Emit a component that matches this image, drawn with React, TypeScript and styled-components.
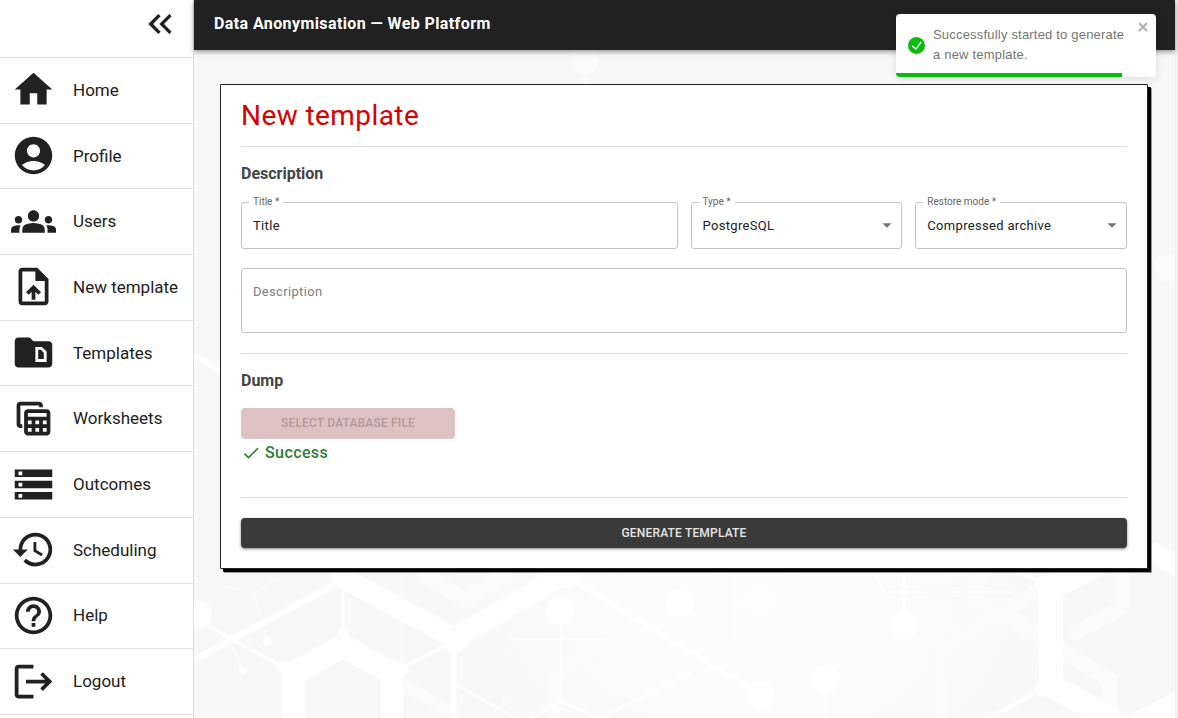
import React from 'react';
import styled, { createGlobalStyle } from 'styled-components';
import {
  MdKeyboardDoubleArrowLeft,
  MdHome,
  MdAccountCircle,
  MdGroups,
  MdOutlineUploadFile,
  MdSnippetFolder,
  MdTableView,
  MdStorage,
  MdHistory,
  MdHelpOutline,
  MdLogout,
  MdCheck,
  MdArrowDropDown,
} from 'react-icons/md';

const GlobalStyle = createGlobalStyle`
  *, *::before, *::after { box-sizing: border-box; }
  body {
    margin: 0;
    font-family: Roboto, "Liberation Sans", sans-serif;
    font-size: 16px;
    color: #212121;
    background: #fff;
  }
  button, input, select, textarea { font: inherit; letter-spacing: inherit; color: inherit; }
`;

const Page = styled.div`
  display: flex;
  min-height: 100vh;
  border-right: 3px solid #f1f1f1;
`;

const Sidebar = styled.aside`
  flex: 0 0 194px;
  border-right: 1px solid #dedede;
  background: #fff;
`;

const SidebarTop = styled.div`
  display: flex;
  justify-content: flex-end;
  align-items: flex-start;
  height: 58px;
  padding: 4px 13px;
  border-bottom: 1px solid #dedede;
`;

const CollapseButton = styled.button`
  display: flex;
  padding: 0;
  border: 0;
  background: none;
  font-size: 40px;
  cursor: pointer;
`;

const NavList = styled.ul`
  display: grid;
  grid-auto-rows: 1fr;
  min-height: 657px;
  margin: 0;
  padding: 0;
  list-style: none;
`;

const NavItem = styled.li`
  display: flex;
  border-bottom: 1px solid #dedede;
`;

const NavLink = styled.a`
  display: flex;
  flex: 1;
  align-items: center;
  gap: 17px;
  padding: 0 0 1px 11px;
  color: inherit;
  font-size: 17px;
  line-height: 24px;
  text-decoration: none;
  white-space: nowrap;

  svg { flex: none; width: 45px; height: 45px; }
`;

const Content = styled.div`
  position: relative;
  display: flex;
  flex: 1;
  flex-direction: column;
  min-width: 0;
`;

const Header = styled.header`
  position: relative;
  z-index: 1;
  display: flex;
  align-items: center;
  height: 50px;
  padding: 0 20px 3px;
  background: #212121;
  box-shadow: 0 2px 4px rgba(0, 0, 0, 0.3), 0 1px 8px rgba(0, 0, 0, 0.15);
  color: #fff;
`;

const AppTitle = styled.span`
  font-size: 16px;
  font-weight: 700;
  letter-spacing: 0.025em;
  line-height: 24px;
`;

const Main = styled.main`
  position: relative;
  flex: 1;
  padding: 34px 27px 34px 26px;
`;

const Backdrop = styled.svg`
  position: absolute;
  inset: 0;
  width: 100%;
  height: 100%;
  background: #f8f8f8;
`;

const Card = styled.form`
  position: relative;
  padding: 12px 20px 20px;
  border: 1px solid #212121;
  border-radius: 1px;
  background: #fff;
  box-shadow: 3px 3px 0 #000, 4px 4px 0 #999;
`;

const PageTitle = styled.h1`
  margin: 0;
  color: #d50000;
  font-size: 28px;
  font-weight: 400;
  letter-spacing: 0.015em;
  line-height: 37px;
`;

const Divider = styled.hr`
  margin: 0;
  border: 0;
  border-top: 1px solid #dedede;
`;

const SectionTitle = styled.h2`
  margin: 0;
  color: #444;
  font-size: 16px;
  font-weight: 700;
  line-height: 24px;
`;

const Section = styled.section<{ $bottom: number }>`
  padding: 15px 0 ${(p) => p.$bottom}px;
`;

const TitleBlock = styled.div`
  padding-bottom: 12px;
`;

const FieldGrid = styled.div`
  display: grid;
  grid-template-columns: repeat(4, minmax(0, 1fr));
  gap: 19px 13px;
  margin-top: 16px;
`;

const Field = styled.div<{ $span?: number }>`
  position: relative;
  grid-column: span ${(p) => p.$span ?? 1};
  display: flex;

  > svg {
    position: absolute;
    top: 12px;
    right: 4px;
    width: 22px;
    height: 22px;
    color: #757575;
    pointer-events: none;
  }
`;

const FieldLabel = styled.label`
  position: absolute;
  top: -8px;
  left: 8px;
  padding: 0 4px;
  background: #fff;
  color: #666;
  font-size: 10px;
  line-height: 16px;
`;

const fieldBox = `
  width: 100%;
  margin: 0;
  border: 1px solid #c4c4c4;
  border-radius: 3px;
  background: #fff;
  color: #212121;
  font-size: 13px;
  letter-spacing: 0.025em;
  outline: 0;
`;

const TextInput = styled.input`
  ${fieldBox}
  height: 47px;
  padding: 0 11px;
`;

const SelectInput = styled.select`
  ${fieldBox}
  height: 47px;
  padding: 0 28px 0 11px;
  appearance: none;
`;

const TextArea = styled.textarea`
  ${fieldBox}
  height: 65px;
  padding: 13px 11px;
  line-height: 20px;
  resize: none;

  &::placeholder { color: #808080; opacity: 1; }
`;

const Button = styled.button`
  display: block;
  border: 0;
  border-radius: 4px;
  font-size: 12px;
  font-weight: 500;
  letter-spacing: 0.015em;
  text-transform: uppercase;
`;

const FileButton = styled(Button)`
  height: 31px;
  margin-top: 15px;
  padding: 0 40px 1px;
  background: #dec1c1;
  color: #b29b9b;
`;

const SubmitButton = styled(Button)`
  width: 100%;
  height: 30px;
  margin-top: 20px;
  background: #3a3a3a;
  box-shadow: 0 1px 3px rgba(0, 0, 0, 0.5);
  color: #e6e6e6;
`;

const Status = styled.p`
  display: flex;
  align-items: center;
  gap: 4px;
  margin: 2px 0 0;
  color: #2e7d32;
  font-size: 16px;
  font-weight: 500;
  letter-spacing: 0.025em;
  line-height: 24px;

  svg { width: 20px; height: 20px; }
`;

const Toast = styled.div`
  position: absolute;
  z-index: 2;
  top: 14px;
  right: 19px;
  display: flex;
  align-items: center;
  gap: 8px;
  width: 260px;
  height: 63px;
  padding: 0 12px;
  overflow: hidden;
  border-radius: 4px;
  background: #fff;
  box-shadow: 0 1px 9px rgba(0, 0, 0, 0.12);
  color: #757575;
  font-family: "Liberation Sans", sans-serif;
  font-size: 13px;
  letter-spacing: 0.015em;
  line-height: 20px;

  > svg { flex: none; }
`;

const ToastText = styled.span`
  padding-bottom: 2px;
  white-space: nowrap;
`;

const ToastClose = styled.button`
  position: absolute;
  top: 8px;
  right: 8px;
  display: flex;
  padding: 0;
  border: 0;
  background: none;
`;

const ToastProgress = styled.div`
  position: absolute;
  bottom: 0;
  left: 0;
  height: 4px;
  background: #07bc0c;
`;

const navigation = [
  { label: 'Home', icon: MdHome },
  { label: 'Profile', icon: MdAccountCircle },
  { label: 'Users', icon: MdGroups },
  { label: 'New template', icon: MdOutlineUploadFile },
  { label: 'Templates', icon: MdSnippetFolder },
  { label: 'Worksheets', icon: MdTableView },
  { label: 'Outcomes', icon: MdStorage },
  { label: 'Scheduling', icon: MdHistory },
  { label: 'Help', icon: MdHelpOutline },
  { label: 'Logout', icon: MdLogout },
];

function MoleculeBackdrop() {
  return (
    <Backdrop viewBox="194 50 981 668" preserveAspectRatio="xMinYMin slice" aria-hidden="true">
      <defs>
        <radialGradient id="glow">
          <stop offset="0" stopColor="#fdfdfd" />
          <stop offset="1" stopColor="#fdfdfd" stopOpacity="0" />
        </radialGradient>
      </defs>
      <ellipse cx="760" cy="600" rx="330" ry="240" fill="url(#glow)" />
      <g fill="none" stroke="#fbfbfb">
        <path d="M402 573V718" strokeWidth="3" />
        <path d="M420 573L465 600L510 573" strokeWidth="16" />
        <path d="M611 573V635M731 573V643M821 573V680" strokeWidth="4" />
        <path d="M554 718V676L611 643L690 690" strokeWidth="14" />
        <path d="M730 650L820 700V718" strokeWidth="16" />
        <path d="M977 573V600L1000 613L1110 680V718" strokeWidth="16" />
        <path d="M939 718V650L1000 613L1040 590" strokeWidth="15" />
        <path d="M1121 573V608L1070 636" strokeWidth="15" />
        <path d="M404 685L460 718" strokeWidth="12" />
        <path d="M225 586L254 594L278 577M254 594L262 625L267 641M230 641L243 670" strokeWidth="2" />
        <path d="M525 615l10 -6l10 6v12l-10 6l-10 -6z" strokeWidth="1" />
        <path d="M467 645h12l7 11l-7 11h-12z" strokeWidth="1" />
        <circle cx="503" cy="651" r="4" />
        <circle cx="507" cy="699" r="4" strokeWidth="2" />
        <circle cx="536" cy="608" r="4" />
        <circle cx="543" cy="651" r="4" />
        <path d="M585 60V90" strokeWidth="2" />
      </g>
      <g fill="#fbfbfb">
        <circle cx="585" cy="61" r="14" />
        <circle cx="1168" cy="268" r="14" />
      </g>
      <g fill="none" stroke="#fefefe">
        <path d="M343 578L455 638L568 572" strokeWidth="21" />
        <path d="M294 718V673L343 646L392 673V718" strokeWidth="23" />
        <path d="M343 580L194 660" strokeWidth="6" />
        <path d="M343 580V636M198 620L284 668M403 668L447 645" strokeWidth="3" />
        <path d="M454 645V718" strokeWidth="5" />
        <path d="M568 577L753 690" strokeWidth="5" />
        <path d="M561 611V700M508 639H606M454 684L520 720" strokeWidth="2" />
        <path d="M530 718L561 702L600 718L690 673" strokeWidth="3" />
        <path d="M904 626V573M827 679V718M885 592H1010M873 573L885 592" strokeWidth="2" />
        <path d="M1051 688V588L1100 563M1051 685L1128 729L1185 700" strokeWidth="24" />
        <path d="M1150 550L1185 571" strokeWidth="20" />
        <path d="M1045 584L1010 568M1045 688L985 720" strokeWidth="4" />
        <path d="M194 355L222 372" strokeWidth="6" />
      </g>
      <g fill="#fefefe">
        <circle cx="198" cy="614" r="14" />
        <circle cx="343" cy="577" r="11" />
        <circle cx="343" cy="634" r="6" />
        <circle cx="284" cy="667" r="6" />
        <circle cx="403" cy="669" r="6" />
        <circle cx="455" cy="641" r="12" />
        <circle cx="568" cy="577" r="12" />
        <circle cx="267" cy="641" r="4" />
        <circle cx="243" cy="670" r="4" />
        <circle cx="560" cy="611" r="14" />
        <circle cx="679" cy="603" r="14" />
        <circle cx="761" cy="695" r="14" />
        <circle cx="826" cy="679" r="14" />
        <circle cx="904" cy="626" r="14" />
        <circle cx="1043" cy="585" r="9" />
        <circle cx="1041" cy="690" r="7" />
      </g>
    </Backdrop>
  );
}

export default function App() {
  return (
    <Page>
      <GlobalStyle />
      <Sidebar>
        <SidebarTop>
          <CollapseButton type="button" aria-label="Collapse menu">
            <MdKeyboardDoubleArrowLeft />
          </CollapseButton>
        </SidebarTop>
        <nav>
          <NavList>
            {navigation.map(({ label, icon: Icon }) => (
              <NavItem key={label}>
                <NavLink href="#">
                  <Icon />
                  {label}
                </NavLink>
              </NavItem>
            ))}
          </NavList>
        </nav>
      </Sidebar>

      <Content>
        <Header>
          <AppTitle>Data Anonymisation — Web Platform</AppTitle>
        </Header>
        <Main>
          <MoleculeBackdrop />
          <Card onSubmit={(e) => e.preventDefault()}>
            <TitleBlock>
              <PageTitle>New template</PageTitle>
            </TitleBlock>
            <Divider />
            <Section $bottom={20}>
              <SectionTitle>Description</SectionTitle>
              <FieldGrid>
                <Field $span={2}>
                  <TextInput id="title" defaultValue="Title" />
                  <FieldLabel htmlFor="title">Title *</FieldLabel>
                </Field>
                <Field>
                  <SelectInput id="type">
                    <option>PostgreSQL</option>
                  </SelectInput>
                  <FieldLabel htmlFor="type">Type *</FieldLabel>
                  <MdArrowDropDown />
                </Field>
                <Field>
                  <SelectInput id="mode">
                    <option>Compressed archive</option>
                  </SelectInput>
                  <FieldLabel htmlFor="mode">Restore mode *</FieldLabel>
                  <MdArrowDropDown />
                </Field>
                <Field $span={4}>
                  <TextArea aria-label="Description" placeholder="Description" />
                </Field>
              </FieldGrid>
            </Section>
            <Divider />
            <Section $bottom={32}>
              <SectionTitle>Dump</SectionTitle>
              <FileButton type="button" disabled>
                Select database file
              </FileButton>
              <Status>
                <MdCheck />
                Success
              </Status>
            </Section>
            <Divider />
            <SubmitButton type="submit">Generate template</SubmitButton>
          </Card>
        </Main>

        <Toast role="alert">
          <svg width="17" height="17" viewBox="0 0 24 24" fill="#07bc0c" aria-hidden="true">
            <path d="M12 0a12 12 0 1012 12A12.014 12.014 0 0012 0zm6.927 8.2l-6.845 9.289a1.011 1.011 0 01-1.43.188l-4.888-3.908a1 1 0 111.25-1.562l4.076 3.261 6.227-8.451a1 1 0 111.61 1.183z" />
          </svg>
          <ToastText>
            Successfully started to generate
            <br />a new template.
          </ToastText>
          <ToastClose type="button" aria-label="Close">
            <svg width="10" height="10" viewBox="0 0 10 10" stroke="#b0b0b0" strokeWidth="2" aria-hidden="true">
              <path d="M1 1L9 9M9 1L1 9" />
            </svg>
          </ToastClose>
          <ToastProgress style={{ width: '87%' }} />
        </Toast>
      </Content>
    </Page>
  );
}
